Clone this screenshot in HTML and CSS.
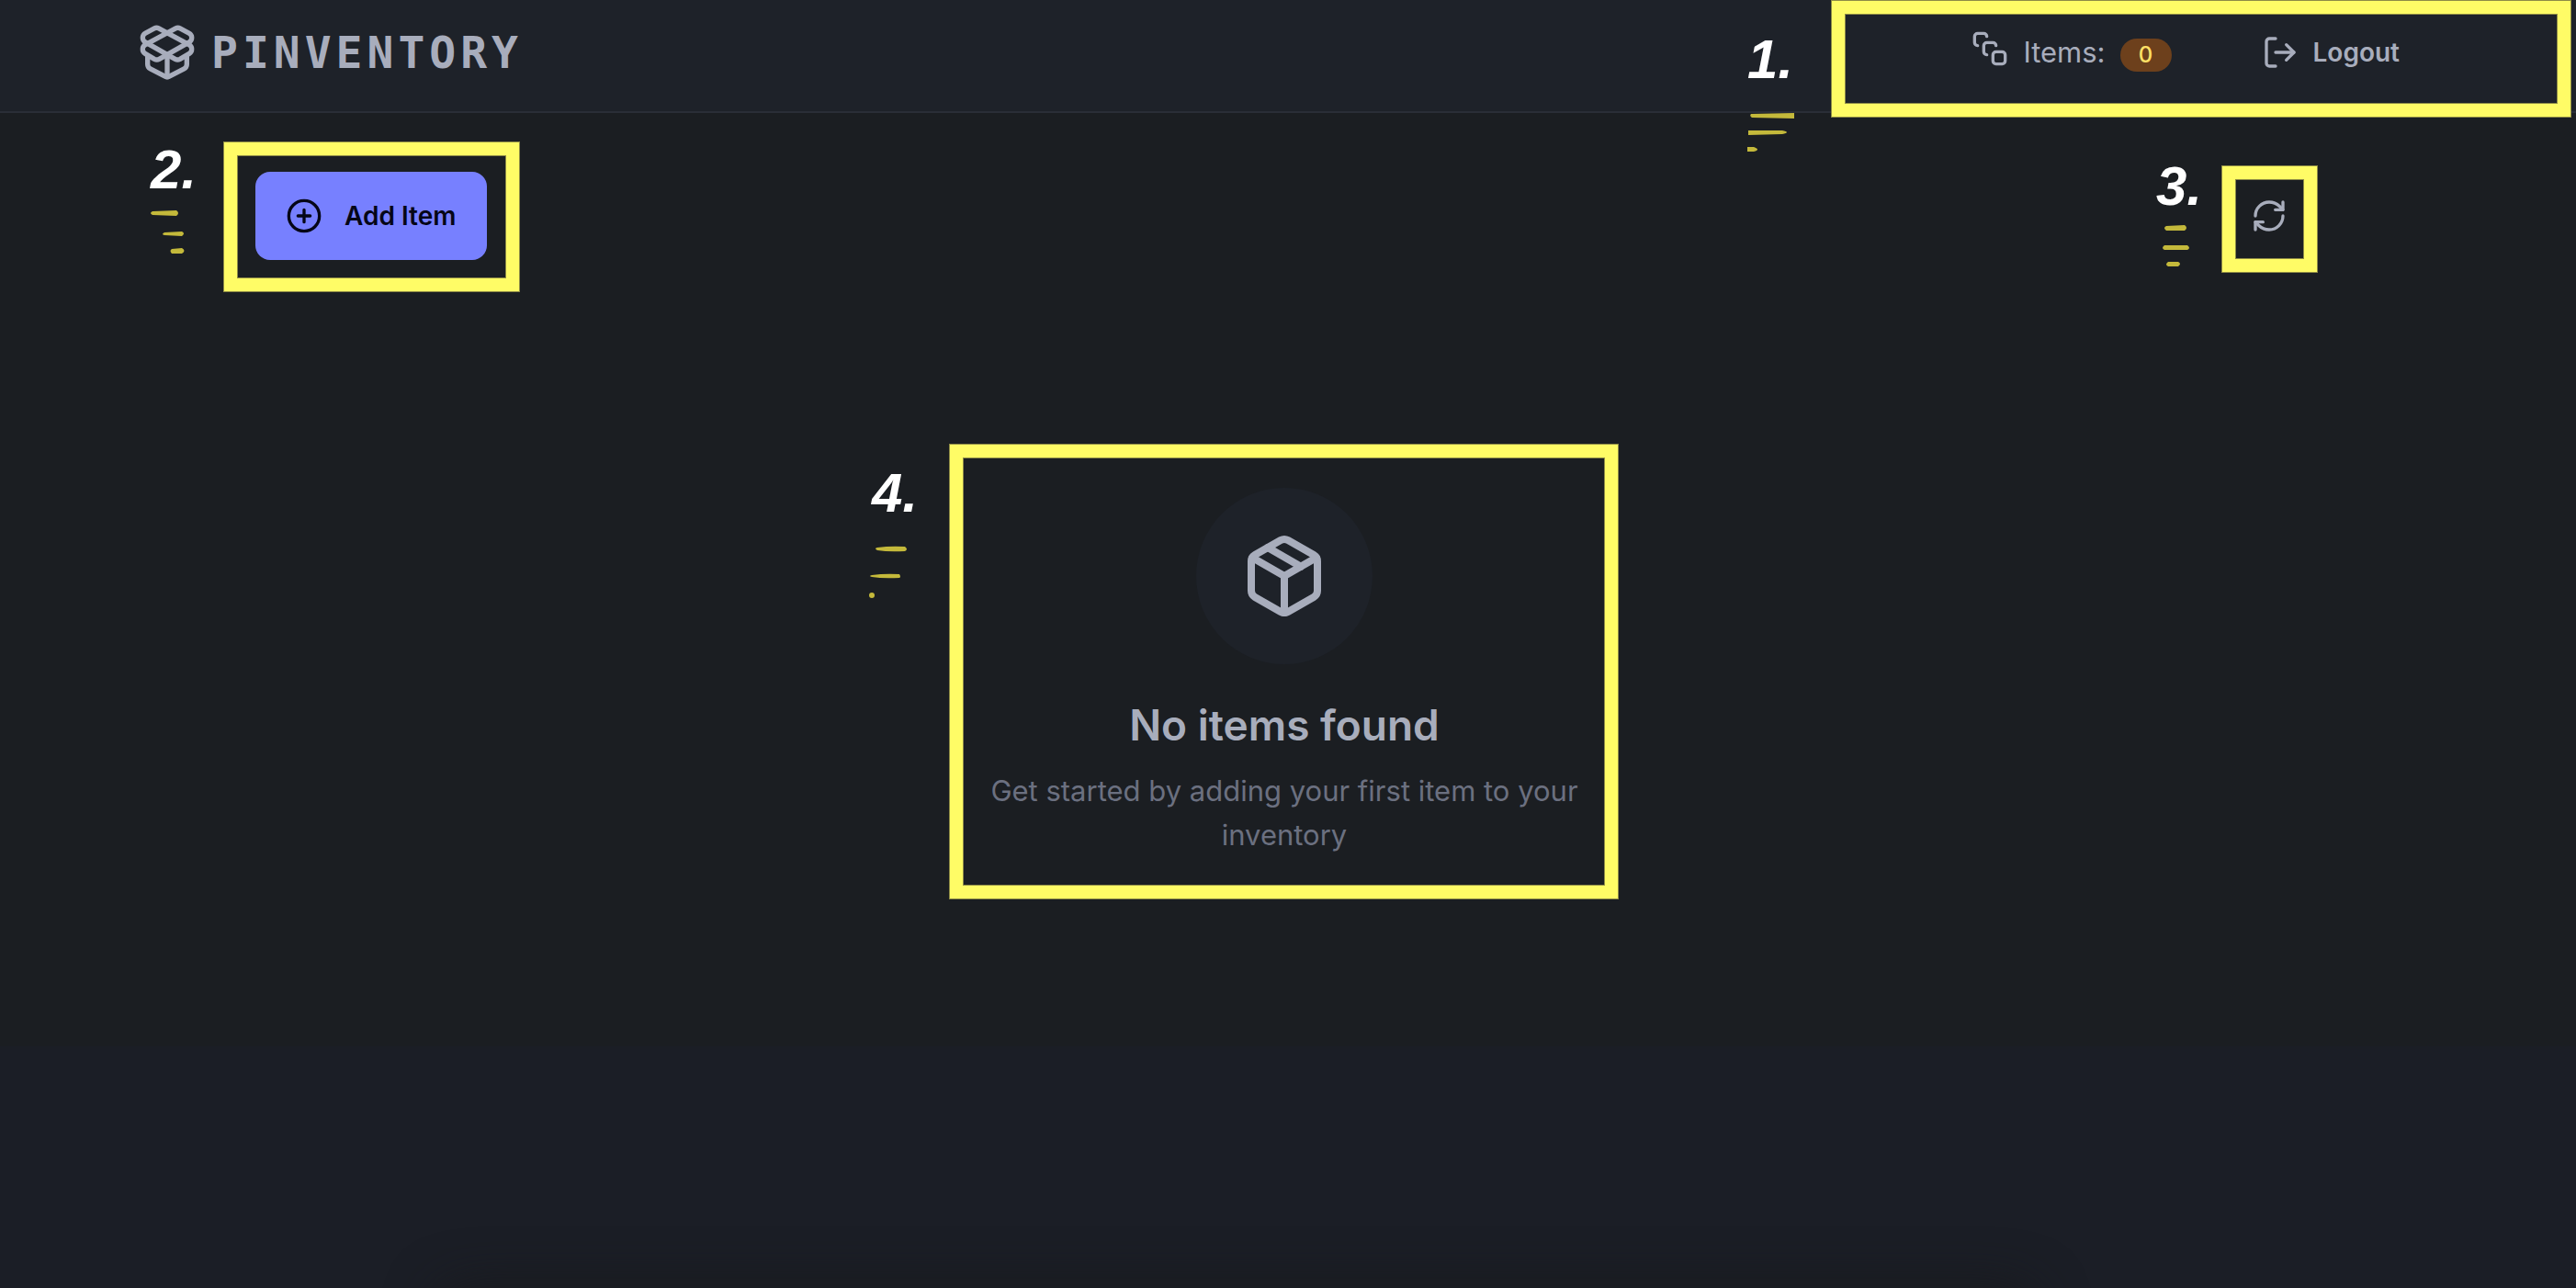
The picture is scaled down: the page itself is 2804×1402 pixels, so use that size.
FILE: index.html
```html
<!DOCTYPE html>
<html lang="en">
<head>
<meta charset="utf-8">
<meta name="viewport" content="width=device-width, initial-scale=1">
<title>Pinventory</title>
<link rel="stylesheet" href="styles.css">
</head>
<body>
<header class="header">
  <div class="header-inner">
    <a class="brand" href="#">
      <svg class="icon icon-brand" viewBox="0 0 24 24" aria-hidden="true"><path d="M20.91 8.84 8.56 2.23a1.93 1.93 0 0 0-1.81 0L3.1 4.13a2.12 2.12 0 0 0-.05 3.69l12.22 6.93a2 2 0 0 0 1.94 0L21 12.51a2.12 2.12 0 0 0-.09-3.67Z"/><path d="m3.09 8.84 12.35-6.61a1.93 1.93 0 0 1 1.81 0l3.65 1.9a2.12 2.12 0 0 1 .1 3.69L8.73 14.75a2 2 0 0 1-1.94 0L3 12.51a2.12 2.12 0 0 1 .09-3.67Z"/><path d="M12 22v-9"/><path d="M20 13.5v3.37a2.06 2.06 0 0 1-1.11 1.83l-6 3.08a1.93 1.93 0 0 1-1.78 0l-6-3.08A2.06 2.06 0 0 1 4 16.87V13.5"/></svg>
      <span class="brand-name">PINVENTORY</span>
    </a>
    <nav class="nav">
      <div class="count">
        <svg class="icon count-icon" viewBox="0 0 24 24" aria-hidden="true"><path d="M4 10c-1.1 0-2-.9-2-2V4c0-1.1.9-2 2-2h4c1.1 0 2 .9 2 2"/><path d="M10 16c-1.1 0-2-.9-2-2v-4c0-1.1.9-2 2-2h4c1.1 0 2 .9 2 2"/><rect width="8" height="8" x="14" y="14" rx="2"/></svg>
        <span class="count-label">Items:</span>
        <span class="badge">0</span>
      </div>
      <button class="btn btn-ghost" type="button">
        <svg class="icon" viewBox="0 0 24 24" aria-hidden="true"><path d="M9 21H5a2 2 0 0 1-2-2V5a2 2 0 0 1 2-2h4"/><path d="m16 17 5-5-5-5"/><path d="M21 12H9"/></svg>
        Logout
      </button>
    </nav>
  </div>
  <div class="frame frame-nav">
    <div class="note note-nav">
      <span>1.</span>
      <svg class="marks" viewBox="0 0 56 48" aria-hidden="true"><path d="M4 1 51 0v6L5 5q-3-2-1-4Z"/><path d="m1 19 37 0q10 2 0 4L1 24Z"/><path d="m0 37h7q8 3 0 5H0Z"/></svg>
    </div>
  </div>
</header>

<main class="main">
  <div class="toolbar">
    <div class="target">
      <button class="btn btn-primary" type="button">
        <svg class="icon" viewBox="0 0 24 24" aria-hidden="true"><circle cx="12" cy="12" r="10"/><path d="M8 12h8M12 8v8"/></svg>
        Add Item
      </button>
      <div class="frame frame-add">
        <div class="note note-add">
          <span>2.</span>
          <svg class="marks" viewBox="0 0 56 48" aria-hidden="true"><path d="M2 1 28 0q4 3 0 6L2 5q-4-2 0-4Z"/><path d="m15 24 19-1q4 2 0 5l-19-1q-4-1 0-3Z"/><path d="m23 42 11-1q5 3 0 6H23q-3-3 0-5Z"/></svg>
        </div>
      </div>
    </div>
    <div class="target">
      <button class="btn btn-square" type="button" aria-label="Refresh">
        <svg class="icon" viewBox="0 0 24 24" aria-hidden="true"><path d="M3 12a9 9 0 0 1 9-9 9.75 9.75 0 0 1 6.74 2.74L21 8"/><path d="M21 3v5h-5"/><path d="M21 12a9 9 0 0 1-9 9 9.75 9.75 0 0 1-6.74-2.74L3 16"/><path d="M8 16H3v5"/></svg>
      </button>
      <div class="frame frame-refresh">
        <div class="note note-refresh">
          <span>3.</span>
          <svg class="marks" viewBox="0 0 56 48" aria-hidden="true"><path d="m11 1 20-1q4 3 0 6H11q-4-3 0-5Z"/><path d="M9 22h25q4 3 0 5H9q-4-2 0-5Z"/><path d="m13 40h11q4 2 0 5H13q-4-2 0-5Z"/></svg>
        </div>
      </div>
    </div>
  </div>

  <section class="empty">
    <div class="empty-icon">
      <svg class="icon icon-package" viewBox="0 0 24 24" aria-hidden="true"><path d="m7.5 4.27 9 5.15"/><path d="M21 8a2 2 0 0 0-1-1.73l-7-4a2 2 0 0 0-2 0l-7 4A2 2 0 0 0 3 8v8a2 2 0 0 0 1 1.73l7 4a2 2 0 0 0 2 0l7-4A2 2 0 0 0 21 16Z"/><path d="m3.3 7 8.7 5 8.7-5"/><path d="M12 22V12"/></svg>
    </div>
    <h1 class="empty-title">No items found</h1>
    <p class="empty-text">Get started by adding your first item to your inventory</p>
    <div class="frame frame-empty">
      <div class="note note-empty">
        <span>4.</span>
        <svg class="marks" viewBox="0 0 56 56" aria-hidden="true"><path d="M9 1q14-2 30-1 4 3 0 5-18 1-30-1-4-2 0-3Z"/><path d="M3 31q14-2 30-1 2 3 0 4-18 1-30-1-4-1 0-2Z"/><circle cx="3" cy="53" r="3"/></svg>
      </div>
    </div>
  </section>
</main>

<footer class="footer"></footer>
</body>
</html>
```
FILE: styles.css
```css
* {
  box-sizing: border-box;
}

body {
  display: flex;
  flex-direction: column;
  min-height: 100vh;
  margin: 0;
  background: #1b1e26;
  color: #a8adbc;
  font-family: Inter, "Liberation Sans", sans-serif;
  font-size: 31px;
  line-height: 48px;
}

/* Icons */
.icon {
  flex: none;
  width: 40px;
  height: 40px;
  fill: none;
  stroke: currentColor;
  stroke-width: 2;
  stroke-linecap: round;
  stroke-linejoin: round;
}

.icon-brand {
  width: 64px;
  height: 64px;
}

.icon-package {
  width: 96px;
  height: 96px;
}

/* Buttons */
.btn {
  display: flex;
  align-items: center;
  justify-content: center;
  height: 96px;
  border: 0;
  border-radius: 16px;
  background: transparent;
  color: inherit;
  font: 600 28px/32px Inter, "Liberation Sans", sans-serif;
  cursor: pointer;
}

.btn-primary {
  gap: 24px;
  padding: 0 33px;
  background: #7780ff;
  color: #050617;
}

.btn-ghost {
  gap: 16px;
  height: 64px;
  padding: 0 34px;
}

.btn-square {
  width: 96px;
  padding: 0;
}

/* Header */
.header {
  position: relative;
  padding-right: 8px;
  border-bottom: 2px solid #2a2e37;
  background: #1e2229;
}

.header-inner {
  display: flex;
  align-items: center;
  justify-content: space-between;
  max-width: 2496px;
  margin: 0 auto;
  padding: 25px 0 32px;
}

.brand {
  display: flex;
  align-items: center;
  gap: 16px;
  color: inherit;
  text-decoration: none;
}

.brand-name {
  font: 700 48px/64px "DejaVu Sans Mono", monospace;
  letter-spacing: 5px;
}

.nav {
  display: flex;
  align-items: center;
  gap: 64px;
}

.count {
  display: flex;
  align-items: center;
  gap: 16px;
}

.count-icon {
  margin-bottom: 8px;
}

.badge {
  width: 56px;
  margin-top: 6px;
  border-radius: 18px;
  background: #6d401c;
  color: #ffe066;
  font-size: 24px;
  font-weight: 500;
  line-height: 36px;
  text-align: center;
}

/* Main */
.main {
  padding: 64px 8px 206px 0;
  background: #1b1e22;
}

.toolbar {
  display: flex;
  justify-content: space-between;
  max-width: 2240px;
  margin: 0 auto;
}

.target {
  position: relative;
}

.empty {
  position: relative;
  display: flex;
  flex-direction: column;
  align-items: center;
  max-width: 640px;
  margin: 248px auto 0;
  text-align: center;
}

.empty-icon {
  display: grid;
  place-items: center;
  width: 192px;
  height: 192px;
  border-radius: 50%;
  background: #1e2229;
}

.empty-title {
  margin: 34px 0 16px;
  font-size: 46px;
  font-weight: 600;
  line-height: 64px;
}

.empty-text {
  margin: 0;
  color: #6b7080;
}

.footer {
  position: relative;
  flex: 1;
  overflow: hidden;
}

.footer::after {
  content: "";
  position: absolute;
  top: 100%;
  left: 17%;
  right: 21%;
  height: 96px;
  border-radius: 32px;
  box-shadow: 0 0 56px rgba(24, 26, 28, 0.9);
}

/* Annotation overlay */
.frame {
  position: absolute;
  border: 14px solid #fffc66;
  outline: 1px solid #8e8b46;
  box-shadow: inset 0 0 0 1px #8e8b46;
  pointer-events: none;
}

.frame-nav {
  top: 1px;
  right: 6px;
  width: 804px;
  height: 126px;
}

.frame-add {
  inset: -32px -35px -34px -34px;
}

.frame-refresh {
  inset: -6px -4px -13px -3px;
}

.frame-empty {
  inset: -47px -43px -45px -44px;
}

.note {
  position: absolute;
  display: flex;
  flex-direction: column;
  color: #fff;
  font: italic 700 60px/60px "Liberation Sans", Arial, sans-serif;
}

.marks {
  width: 56px;
  overflow: visible;
  fill: #c4b93b;
}

.note-nav {
  top: 20px;
  left: -106px;
  gap: 28px;
}

.note-add {
  top: -14px;
  left: -94px;
  gap: 14px;
}

.note-refresh {
  top: -22px;
  left: -86px;
  gap: 12px;
}

.note-empty {
  top: 9px;
  left: -102px;
  gap: 28px;
}
```
